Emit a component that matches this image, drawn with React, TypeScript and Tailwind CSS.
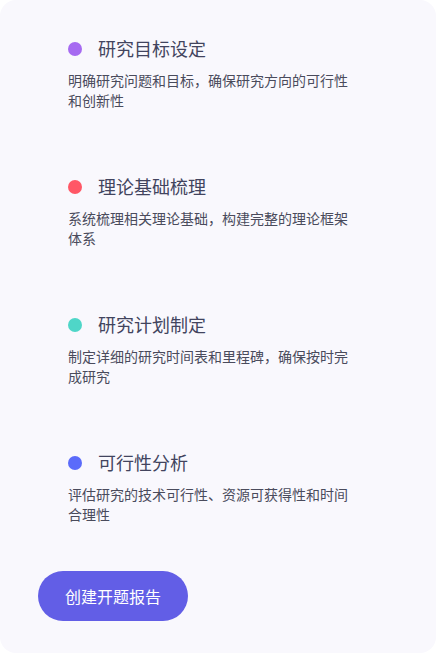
import React from "react";

const items = [
  { color: "#a66af1", title: "研究目标设定", desc: "明确研究问题和目标，确保研究方向的可行性和创新性" },
  { color: "#ff5766", title: "理论基础梳理", desc: "系统梳理相关理论基础，构建完整的理论框架体系" },
  { color: "#4fd6c8", title: "研究计划制定", desc: "制定详细的研究时间表和里程碑，确保按时完成研究" },
  { color: "#5b6bfa", title: "可行性分析", desc: "评估研究的技术可行性、资源可获得性和时间合理性" },
];

export default function App() {
  return (
    <div className="w-[436px] h-[654px] bg-white" style={{ fontFamily: '"Noto Sans CJK SC", "Noto Sans", sans-serif' }}>
      <div className="h-[653px] w-[436px] rounded-2xl bg-[#f9f8fd] px-[38px] pt-[35px] flex flex-col">
        <div className="flex flex-col gap-[63px] pl-[30px]">
          {items.map((it) => (
            <div key={it.title} className="flex flex-col">
              <div className="flex items-center h-[27px]">
                <span className="w-[14px] h-[14px] rounded-full" style={{ backgroundColor: it.color }} />
                <span className="ml-[16px] text-[18px] leading-[27px] text-[#42445e]">{it.title}</span>
              </div>
              <p className="mt-[8px] max-w-[282px] text-[14px] leading-[20px] text-[#4a4b5c]">{it.desc}</p>
            </div>
          ))}
        </div>
        <div className="mt-[47px]">
          <button className="w-[150px] h-[50px] rounded-full bg-[#625ee6] text-white text-[16px]">创建开题报告</button>
        </div>
      </div>
    </div>
  );
}
